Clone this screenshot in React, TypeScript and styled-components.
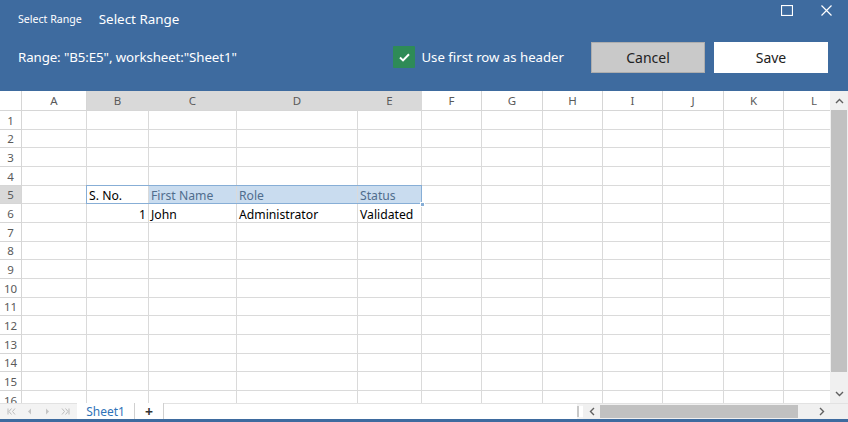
import React from 'react';
import styled, { createGlobalStyle, css } from 'styled-components';

const BLUE = '#3e6b9f';
const FONT = `'Noto Sans', 'Open Sans', Arial, sans-serif`;

const COLS = [
	{ name: 'A', width: 65 },
	{ name: 'B', width: 62 },
	{ name: 'C', width: 88 },
	{ name: 'D', width: 121 },
	{ name: 'E', width: 64 },
	{ name: 'F', width: 60 },
	{ name: 'G', width: 61 },
	{ name: 'H', width: 60 },
	{ name: 'I', width: 60 },
	{ name: 'J', width: 61 },
	{ name: 'K', width: 60 },
	{ name: 'L', width: 61 },
];
const ROW_HEADER_W = 22;
const COL_HEADER_H = 20;
const ROW_COUNT = 16;
const ROW_PITCH = 18.667;

const rowHeights = Array.from({ length: ROW_COUNT }, (_, i) =>
	Math.round((i + 1) * ROW_PITCH) - Math.round(i * ROW_PITCH),
);

// sheet data, keyed by row number then column letter
const DATA: Record<number, Record<string, { text: string; align?: 'right' }>> = {
	5: { B: { text: 'S. No.' }, C: { text: 'First Name' }, D: { text: 'Role' }, E: { text: 'Status' } },
	6: { B: { text: '1', align: 'right' }, C: { text: 'John' }, D: { text: 'Administrator' }, E: { text: 'Validated' } },
};

const SEL = { row: 5, from: 1, to: 4 }; // B5:E5 (column indexes)

const GlobalStyle = createGlobalStyle`
	html, body { margin: 0; padding: 0; background: #fff; }
	body { font-family: ${FONT}; }
	* { box-sizing: border-box; }
`;

const App = () => {
	const selLeft = ROW_HEADER_W + COLS.slice(0, SEL.from).reduce((s, c) => s + c.width, 0) - 1;
	const selWidth = COLS.slice(SEL.from, SEL.to + 1).reduce((s, c) => s + c.width, 0) + 1;
	const selTop = COL_HEADER_H + rowHeights.slice(0, SEL.row - 1).reduce((s, h) => s + h, 0) - 1;
	const selHeight = rowHeights[SEL.row - 1] + 1;

	return (
		<>
			<GlobalStyle />
			<Window>
				<Header>
					<TitleBar>
						<AppTitle>Select Range</AppTitle>
						<DialogTitle>Select Range</DialogTitle>
						<WindowControls>
							<WinButton aria-label="Maximize">
								<svg width="12" height="11" viewBox="0 0 12 11">
									<rect x="0.5" y="0.5" width="11" height="10" fill="none" stroke="#fff" strokeWidth="1.2" />
								</svg>
							</WinButton>
							<WinButton aria-label="Close">
								<svg width="11" height="11" viewBox="0 0 11 11">
									<path d="M0.5 0.5 L10.5 10.5 M10.5 0.5 L0.5 10.5" stroke="#fff" strokeWidth="1.2" />
								</svg>
							</WinButton>
						</WindowControls>
					</TitleBar>
					<ToolRow>
						<RangeText>Range: "B5:E5", worksheet:"Sheet1"</RangeText>
						<CheckLabel>
							<CheckBox>
								<svg width="11" height="9" viewBox="0 0 11 9">
									<path d="M1 4.6 L4 7.4 L10 1.2" fill="none" stroke="#fff" strokeWidth="2" />
								</svg>
							</CheckBox>
							Use first row as header
						</CheckLabel>
						<DialogButton $variant="secondary">Cancel</DialogButton>
						<DialogButton $variant="primary">Save</DialogButton>
					</ToolRow>
				</Header>

				<SheetArea>
					<GridViewport>
						<Grid
							style={{
								gridTemplateColumns: `${ROW_HEADER_W}px ${COLS.map((c) => `${c.width}px`).join(' ')}`,
								gridTemplateRows: `${COL_HEADER_H}px ${rowHeights.map((h) => `${h}px`).join(' ')}`,
							}}
						>
							<Corner />
							{COLS.map((c, ci) => (
								<ColHeader key={c.name} $selected={ci >= SEL.from && ci <= SEL.to}>
									{c.name}
								</ColHeader>
							))}
							{rowHeights.map((_, ri) => {
								const row = ri + 1;
								return (
									<React.Fragment key={row}>
										<RowHeader $selected={row === SEL.row}>{row}</RowHeader>
										{COLS.map((c, ci) => {
											const cell = DATA[row]?.[c.name];
											const inSel = row === SEL.row && ci >= SEL.from && ci <= SEL.to;
											const active = inSel && ci === SEL.from;
											return (
												<Cell
													key={c.name}
													$align={cell?.align}
													$tinted={inSel && !active}
												>
													{cell?.text}
												</Cell>
											);
										})}
									</React.Fragment>
								);
							})}
						</Grid>
						<SelectionBox
							style={{ left: selLeft, top: selTop, width: selWidth, height: selHeight }}
						>
							<FillHandle />
						</SelectionBox>
					</GridViewport>
					<VScroll>
						<ScrollArrow>
							<svg width="9" height="6" viewBox="0 0 9 6">
								<path d="M1 5 L4.5 1.5 L8 5" fill="none" stroke="#606060" strokeWidth="1.4" />
							</svg>
						</ScrollArrow>
						<VThumb />
						<ScrollArrow>
							<svg width="9" height="6" viewBox="0 0 9 6">
								<path d="M1 1 L4.5 4.5 L8 1" fill="none" stroke="#606060" strokeWidth="1.4" />
							</svg>
						</ScrollArrow>
					</VScroll>
				</SheetArea>

				<BottomBar>
					<TabNav>
						<NavIcon viewBox="0 0 9 7">
							<path d="M1 0.5 V6.5 M4.5 0.5 L2 3.5 L4.5 6.5 M8 0.5 L5.5 3.5 L8 6.5" fill="none" stroke="#bbb" strokeWidth="1" />
						</NavIcon>
						<NavIcon viewBox="0 0 9 7">
							<path d="M6 0.5 L3 3.5 L6 6.5 Z" fill="#c4c4c4" />
						</NavIcon>
						<NavIcon viewBox="0 0 9 7">
							<path d="M3 0.5 L6 3.5 L3 6.5 Z" fill="#c4c4c4" />
						</NavIcon>
						<NavIcon viewBox="0 0 9 7">
							<path d="M8 0.5 V6.5 M1 0.5 L3.5 3.5 L1 6.5 M4.5 0.5 L7 3.5 L4.5 6.5" fill="none" stroke="#bbb" strokeWidth="1" />
						</NavIcon>
					</TabNav>
					<SheetTab $active>Sheet1</SheetTab>
					<SheetTab>+</SheetTab>
					<TabFiller />
					<Splitter />
					<HScroll>
						<HArrow>
							<svg width="6" height="9" viewBox="0 0 6 9">
								<path d="M5 1 L1.5 4.5 L5 8" fill="none" stroke="#606060" strokeWidth="1.4" />
							</svg>
						</HArrow>
						<HThumb />
						<HArrow>
							<svg width="6" height="9" viewBox="0 0 6 9">
								<path d="M1 1 L4.5 4.5 L1 8" fill="none" stroke="#606060" strokeWidth="1.4" />
							</svg>
						</HArrow>
					</HScroll>
					<ScrollCorner />
				</BottomBar>
			</Window>
		</>
	);
};

export default App;

const Window = styled.div`
	display: flex;
	flex-direction: column;
	width: 848px;
	height: 422px;
	overflow: hidden;
	background: #fff;
	border-bottom: 3px solid ${BLUE};
`;

const Header = styled.header`
	display: flex;
	flex-direction: column;
	height: 91px;
	flex: none;
	background: ${BLUE};
	color: #fff;
`;

const TitleBar = styled.div`
	display: flex;
	align-items: center;
	height: 38px;
	padding-left: 18px;
`;

const AppTitle = styled.span`
	font-size: 10.6px;
	margin-right: 17px;
`;

const DialogTitle = styled.span`
	font-size: 13.4px;
`;

const WindowControls = styled.div`
	display: flex;
	align-self: flex-start;
	margin-left: auto;
	padding-top: 5px;
	padding-right: 16px;
	gap: 27px;
`;

const WinButton = styled.div`
	display: flex;
	align-items: center;
	justify-content: center;
	width: 12px;
	height: 11px;
`;

const ToolRow = styled.div`
	display: flex;
	align-items: center;
	height: 38px;
	padding: 0 20px 0 18px;
`;

const RangeText = styled.span`
	font-size: 13.3px;
	letter-spacing: -0.1px;
`;

const CheckLabel = styled.label`
	display: flex;
	align-items: center;
	gap: 6px;
	margin-left: auto;
	margin-right: 27px;
	font-size: 13.2px;
`;

const CheckBox = styled.span`
	display: flex;
	align-items: center;
	justify-content: center;
	width: 22px;
	height: 22px;
	background: #2e8b57;
	border-radius: 1px;
`;

const DialogButton = styled.button<{ $variant: 'primary' | 'secondary' }>`
	width: 114px;
	height: 31px;
	font-family: ${FONT};
	font-size: 14px;
	color: #222;
	border: 1px solid;
	border-radius: 0;
	padding: 0;

	${(p) =>
		p.$variant === 'secondary'
			? css`
					background: #c9c9c9;
					border-color: #aeaeae;
					margin-right: 9px;
			  `
			: css`
					background: #fff;
					border-color: #fff;
			  `}
`;

const SheetArea = styled.div`
	display: flex;
	flex: 1;
	min-height: 0;
`;

const GridViewport = styled.div`
	position: relative;
	flex: 1;
	overflow: hidden;
`;

const Grid = styled.div`
	display: grid;
	font-size: 12.2px;
	color: #000;
`;

const headerCell = css`
	display: flex;
	align-items: center;
	justify-content: center;
	color: #5a5a5a;
	font-size: 11.5px;
	border-right: 1px solid #d6d6d6;
	border-bottom: 1px solid #d6d6d6;
	overflow: hidden;
	white-space: nowrap;
`;

const Corner = styled.div`
	${headerCell};
	background: #fff;
`;

const ColHeader = styled.div<{ $selected?: boolean }>`
	${headerCell};
	background: ${(p) => (p.$selected ? '#d9d9d9' : '#fff')};
	border-right-color: ${(p) => (p.$selected ? '#d9d9d9' : '#d6d6d6')};
`;

const RowHeader = styled.div<{ $selected?: boolean }>`
	${headerCell};
	background: ${(p) => (p.$selected ? '#d9d9d9' : '#fff')};
`;

const Cell = styled.div<{ $align?: 'right'; $tinted?: boolean }>`
	display: flex;
	align-items: flex-end;
	justify-content: ${(p) => (p.$align === 'right' ? 'flex-end' : 'flex-start')};
	padding: 0 2px;
	line-height: 14px;
	border-right: 1px solid #dadada;
	border-bottom: 1px solid #dadada;
	overflow: hidden;
	white-space: nowrap;
	background: ${(p) => (p.$tinted ? '#c9dcef' : '#fff')};
	color: ${(p) => (p.$tinted ? '#506d8d' : '#000')};
`;

const SelectionBox = styled.div`
	position: absolute;
	border: 1px solid #87aed6;
	pointer-events: none;
`;

const FillHandle = styled.div`
	position: absolute;
	right: -4px;
	bottom: -4px;
	width: 5px;
	height: 5px;
	background: #87aed6;
	border: 1px solid #fff;
`;

const VScroll = styled.div`
	display: flex;
	flex-direction: column;
	width: 18px;
	flex: none;
	background: #f0f0f0;
`;

const ScrollArrow = styled.div`
	display: flex;
	align-items: center;
	justify-content: center;
	height: 19px;
	flex: none;
`;

const VThumb = styled.div`
	height: 262px;
	margin: 0 1px;
	background: #c1c1c1;
	margin-bottom: auto;
`;

const BottomBar = styled.div`
	display: flex;
	align-items: stretch;
	height: 16px;
	flex: none;
	background: #f3f3f3;
	border-top: 1px solid #e2e2e2;
`;

const TabNav = styled.div`
	display: flex;
	align-items: center;
	gap: 9px;
	padding-left: 7px;
	width: 77px;
`;

const NavIcon = styled.svg`
	width: 9px;
	height: 7px;
`;

const SheetTab = styled.div<{ $active?: boolean }>`
	display: flex;
	align-items: center;
	justify-content: center;
	width: ${(p) => (p.$active ? '58px' : '29px')};
	font-size: ${(p) => (p.$active ? '12px' : '14px')};
	font-weight: ${(p) => (p.$active ? 400 : 700)};
	color: ${(p) => (p.$active ? '#2f73b8' : '#333')};
	background: #fff;
	border-right: 1px solid #d0d0d0;
	margin-top: -1px;
`;

const TabFiller = styled.div`
	flex: 1;
	background: #fff;
`;

const Splitter = styled.div`
	width: 6px;
	background: #fff;
	border-left: 2px solid #c8c8c8;
	margin: 2px 0;
`;

const HScroll = styled.div`
	display: flex;
	align-items: stretch;
	width: 247px;
	background: #f0f0f0;
`;

const HArrow = styled.div`
	display: flex;
	align-items: center;
	justify-content: center;
	width: 17px;
`;

const HThumb = styled.div`
	width: 198px;
	margin: 1px 0;
	background: #c1c1c1;
	margin-right: auto;
`;

const ScrollCorner = styled.div`
	width: 18px;
	background: #f0f0f0;
`;
